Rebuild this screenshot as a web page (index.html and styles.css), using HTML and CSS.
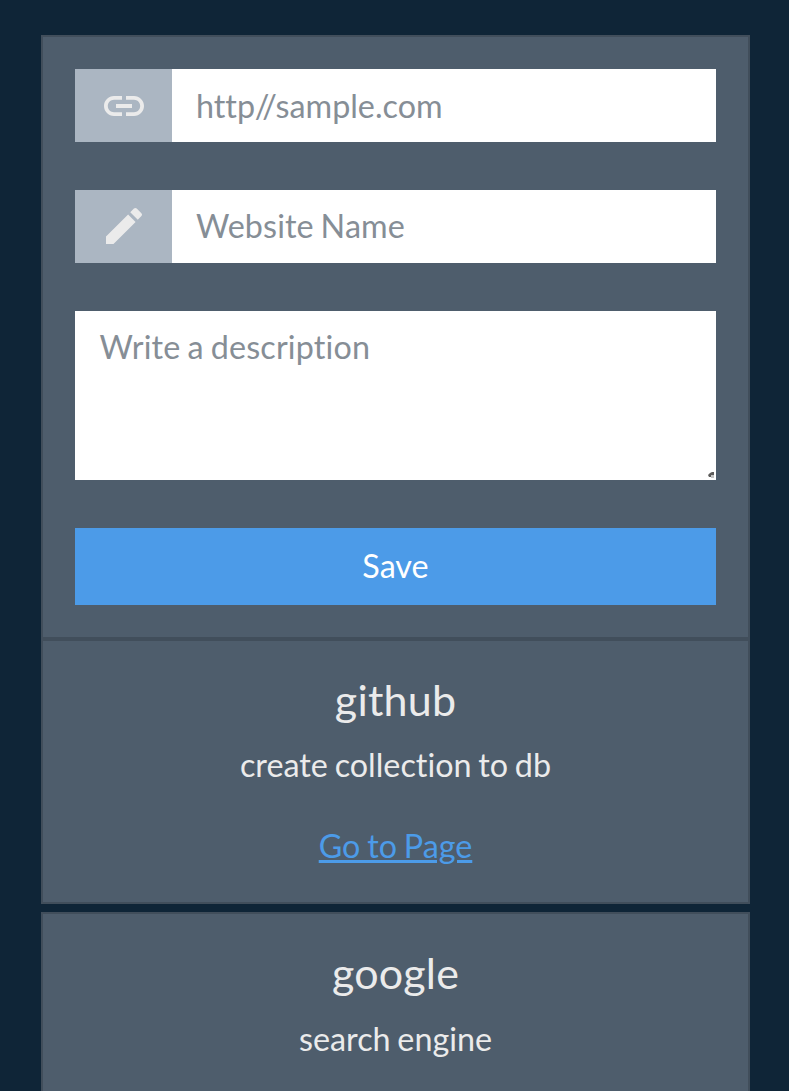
FILE: index.html
```html
<!DOCTYPE html>
<html lang="en">
<head>
<meta charset="utf-8">
<title>Bookmarks</title>
<link rel="stylesheet" href="styles.css">
</head>
<body>
<main class="page">
  <form class="card form">
    <div class="field">
      <span class="field-icon field-icon-link"><svg class="icon" viewBox="0 0 24 24"><path d="M3.9 12c0-1.71 1.39-3.1 3.1-3.1h4V7H7c-2.76 0-5 2.24-5 5s2.24 5 5 5h4v-1.9H7c-1.71 0-3.1-1.39-3.1-3.1zM8 13h8v-2H8v2zm9-6h-4v1.9h4c1.71 0 3.1 1.39 3.1 3.1s-1.39 3.1-3.1 3.1h-4V17h4c2.76 0 5-2.24 5-5s-2.24-5-5-5z"/></svg></span>
      <input class="input" type="text" placeholder="http//sample.com">
    </div>
    <div class="field">
      <span class="field-icon field-icon-pen"><svg class="icon" viewBox="0 0 24 24"><path d="M3 17.25V21h3.75L17.81 9.94l-3.75-3.75L3 17.25zM20.71 7.04a1 1 0 0 0 0-1.41l-2.34-2.34a1 1 0 0 0-1.41 0l-1.83 1.83 3.75 3.75 1.83-1.83z"/></svg></span>
      <input class="input input-name" type="text" placeholder="Website Name">
    </div>
    <div class="area">
      <textarea class="textarea" placeholder="Write a description"></textarea>
      <svg class="grip" viewBox="0 0 8 8"><path class="grip-dark" d="M1 4L3 2 5 1 7 1 7 4 5 4 4 6 2 6z"/><path class="grip-light" d="M4 4h3v3H4z"/></svg>
    </div>
    <button class="save" type="button">Save</button>
  </form>
  <section class="list">
    <article class="card item">
      <h2 class="title">github</h2>
      <p class="text">create collection to db</p>
      <a class="link" href="#">Go to Page</a>
    </article>
    <article class="card item item-last">
      <h2 class="title">google</h2>
      <p class="text">search engine</p>
    </article>
  </section>
</main>
</body>
</html>
```
FILE: styles.css
```css
* { box-sizing: border-box; }
body {
  margin: 0;
  height: 1091px;
  overflow: hidden;
  background: #0f2537;
  color: #ebebeb;
  font-family: Lato, sans-serif;
  font-size: 32.3px;
  font-variant-ligatures: none;
  word-spacing: -1.5px;
}
.page { padding: 35px 39px 0 41px; }
.card { background: #4e5d6c; border: 2px solid #414e5b; }
.form {
  display: flex;
  flex-direction: column;
  gap: 48px;
  height: 604px;
  padding: 32px;
}
.field { display: flex; height: 73px; }
.field-icon {
  display: flex;
  align-items: center;
  justify-content: center;
  width: 97px;
  padding-left: 1px;
  background: #abb6c2;
}
.field-icon-link { padding-top: 1px; }
.field-icon-pen { padding-bottom: 1px; }
.icon { width: 48px; height: 48px; fill: #ebebeb; }
.input, .textarea {
  border: 0;
  margin: 0;
  border-radius: 0;
  background: #fff;
  font: inherit;
  font-variant-ligatures: none;
  word-spacing: inherit;
  outline: 0;
}
.input { flex: 1; min-width: 0; padding: 0 24px; }
.input-name { padding-bottom: 2px; letter-spacing: 0.1px; }
.textarea {
  display: block;
  width: 100%;
  height: 169px;
  padding: 17px 24.5px;
  line-height: 38px;
  letter-spacing: 0.18px;
  resize: none;
}
.input::placeholder, .textarea::placeholder { color: #868e96; opacity: 1; }
.area { position: relative; }
.grip {
  position: absolute;
  right: 1px;
  bottom: 1px;
  width: 8px;
  height: 8px;
}
.grip-dark { fill: #5d5c5b; }
.grip-light { fill: #c4c4c4; }
.save {
  height: 77px;
  border: 0;
  padding: 0 0 2px;
  background: #4c9be8;
  color: #fff;
  font: inherit;
}
.list { display: flex; flex-direction: column; gap: 8px; }
.item {
  display: flex;
  flex-direction: column;
  align-items: center;
  height: 265px;
  padding-top: 34px;
}
.item-last { height: 179px; border-bottom: 0; }
.item-last .text { margin-top: 21px; }
.title { margin: 0; font-size: 43px; font-weight: 400; line-height: 50px; letter-spacing: 0.2px; }
.text { margin: 20px 0 0; line-height: 40px; }
.link { margin-top: 41px; line-height: 40px; color: #4c9be8; }
```
